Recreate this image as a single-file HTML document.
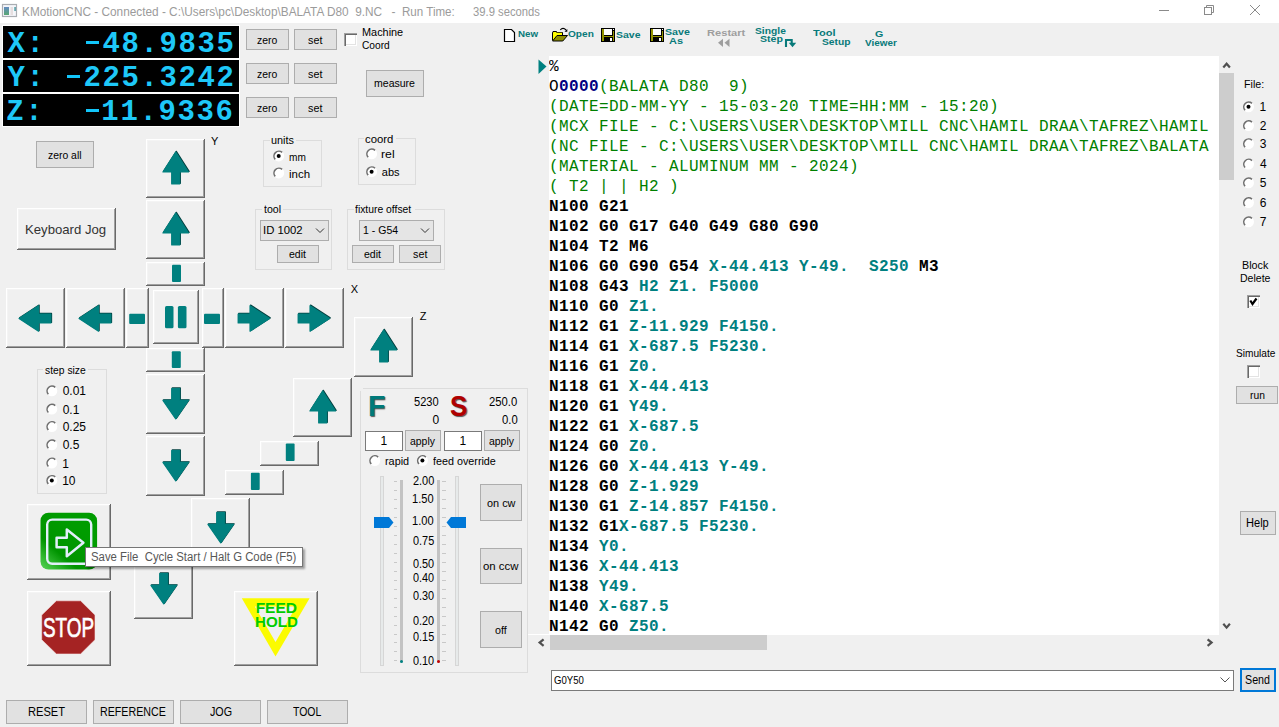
<!DOCTYPE html><html><head><meta charset="utf-8"><title>KMotionCNC</title><style>

*{margin:0;padding:0}
html,body{width:1279px;height:727px;overflow:hidden;background:#f0f0f0;font-family:"Liberation Sans",sans-serif}
.a{position:absolute}
.t{position:absolute;white-space:pre;line-height:1;transform-origin:0 0}
.btn{position:absolute;box-sizing:border-box;background:#e1e1e1;border:1px solid #adadad}
.b3{position:absolute;box-sizing:border-box;background:#f0f0f0;box-shadow:inset -1px -1px #696969,inset 1px 1px #fff,inset -2px -2px #a0a0a0,inset 2px 2px #f4f4f4}
.grp{position:absolute;box-sizing:border-box;border:1px solid #dcdcdc}
.chk{position:absolute;box-sizing:border-box;background:#fff;box-shadow:inset 1px 1px #a0a0a0,inset 2px 2px #696969,inset -1px -1px #fff,inset -2px -2px #e3e3e3}
.cmb{position:absolute;box-sizing:border-box;background:#e5e5e5;border:1px solid #adadad}
.inp{position:absolute;box-sizing:border-box;background:#fff;border:1px solid #7a7a7a}
.trk{position:absolute;box-sizing:border-box;background:#e7eaea;border:1px solid #d6d6d6}
.cl{position:absolute;left:0;white-space:pre;font-family:"Liberation Mono",monospace;font-size:16px;line-height:16px;letter-spacing:0.3984px}

</style></head><body>
<div class="a" style="left:0px;top:0px;width:1279px;height:23px;background:#fff"></div>
<div class="a" style="left:2px;top:25px;width:238px;height:102px;background:#fff"></div>
<div class="a" style="left:3px;top:26px;width:236px;height:32px;background:#000"></div>
<div class="a" style="left:86px;top:41px;width:13px;height:3px;background:#12c6fa"></div>
<div class="btn" style="left:246px;top:29px;width:43px;height:21px;"></div>
<div class="btn" style="left:294px;top:29px;width:43px;height:21px;"></div>
<div class="a" style="left:3px;top:60px;width:236px;height:32px;background:#000"></div>
<div class="a" style="left:67px;top:75px;width:13px;height:3px;background:#12c6fa"></div>
<div class="btn" style="left:246px;top:63px;width:43px;height:21px;"></div>
<div class="btn" style="left:294px;top:63px;width:43px;height:21px;"></div>
<div class="a" style="left:3px;top:94px;width:236px;height:32px;background:#000"></div>
<div class="a" style="left:86px;top:109px;width:13px;height:3px;background:#12c6fa"></div>
<div class="btn" style="left:246px;top:97px;width:43px;height:21px;"></div>
<div class="btn" style="left:294px;top:97px;width:43px;height:21px;"></div>
<div class="chk" style="left:344px;top:33px;width:13px;height:13px;"></div>
<div class="btn" style="left:366px;top:70px;width:58px;height:27px;"></div>
<div class="btn" style="left:36px;top:141px;width:58px;height:27px;"></div>
<div class="b3" style="left:17px;top:208px;width:99px;height:42px;"></div>
<div class="b3" style="left:146px;top:139px;width:59px;height:59px;"></div>
<div class="b3" style="left:146px;top:200px;width:59px;height:59px;"></div>
<div class="b3" style="left:146px;top:262px;width:59px;height:24px;"></div>
<div class="b3" style="left:6px;top:288px;width:59px;height:60px;"></div>
<div class="b3" style="left:66px;top:288px;width:59px;height:60px;"></div>
<div class="b3" style="left:126px;top:288px;width:23px;height:60px;"></div>
<div class="b3" style="left:153px;top:290px;width:46px;height:54px;"></div>
<div class="b3" style="left:202px;top:288px;width:22px;height:60px;"></div>
<div class="b3" style="left:225px;top:288px;width:59px;height:60px;"></div>
<div class="b3" style="left:285px;top:288px;width:59px;height:60px;"></div>
<div class="b3" style="left:146px;top:348px;width:59px;height:24px;"></div>
<div class="b3" style="left:146px;top:374px;width:59px;height:60px;"></div>
<div class="b3" style="left:146px;top:436px;width:59px;height:60px;"></div>
<div class="b3" style="left:354px;top:317px;width:59px;height:60px;"></div>
<div class="b3" style="left:293px;top:378px;width:59px;height:59px;"></div>
<div class="b3" style="left:260px;top:441px;width:59px;height:25px;"></div>
<div class="b3" style="left:225px;top:470px;width:59px;height:25px;"></div>
<div class="b3" style="left:191px;top:498px;width:59px;height:60px;"></div>
<div class="b3" style="left:134px;top:559px;width:59px;height:60px;"></div>
<div class="grp" style="left:263px;top:140px;width:59px;height:47px;"></div>
<div class="a" style="left:270px;top:137px;width:26px;height:6px;background:#f0f0f0"></div>
<div class="grp" style="left:358px;top:138px;width:58px;height:47px;"></div>
<div class="a" style="left:364px;top:135px;width:32px;height:6px;background:#f0f0f0"></div>
<div class="grp" style="left:255px;top:209px;width:77px;height:61px;"></div>
<div class="a" style="left:262px;top:206px;width:21px;height:6px;background:#f0f0f0"></div>
<div class="cmb" style="left:260px;top:220px;width:69px;height:21px;"></div>
<div class="btn" style="left:277px;top:245px;width:42px;height:18px;"></div>
<div class="grp" style="left:347px;top:209px;width:98px;height:61px;"></div>
<div class="a" style="left:354px;top:206px;width:61px;height:6px;background:#f0f0f0"></div>
<div class="cmb" style="left:359px;top:220px;width:75px;height:21px;"></div>
<div class="btn" style="left:352px;top:245px;width:42px;height:18px;"></div>
<div class="btn" style="left:399px;top:245px;width:42px;height:18px;"></div>
<div class="grp" style="left:37px;top:369px;width:70px;height:125px;"></div>
<div class="a" style="left:43px;top:366px;width:45px;height:6px;background:#f0f0f0"></div>
<div class="b3" style="left:27px;top:504px;width:84px;height:76px;"></div>
<div class="b3" style="left:27px;top:591px;width:84px;height:75px;"></div>
<div class="b3" style="left:234px;top:591px;width:84px;height:75px;"></div>
<div class="btn" style="left:6px;top:700px;width:81px;height:24px;"></div>
<div class="btn" style="left:93px;top:700px;width:81px;height:24px;"></div>
<div class="btn" style="left:180px;top:700px;width:81px;height:24px;"></div>
<div class="btn" style="left:267px;top:700px;width:81px;height:24px;"></div>
<div class="grp" style="left:360px;top:388px;width:168px;height:285px;"></div>
<div class="a" style="left:358px;top:385px;width:5px;height:6px;background:#f0f0f0"></div>
<div class="inp" style="left:365px;top:431px;width:38px;height:20px;"></div>
<div class="btn" style="left:405px;top:430px;width:36px;height:21px;"></div>
<div class="inp" style="left:444px;top:431px;width:38px;height:20px;"></div>
<div class="btn" style="left:484px;top:430px;width:36px;height:21px;"></div>
<div class="trk" style="left:380px;top:476px;width:4px;height:190px;"></div>
<div class="trk" style="left:455px;top:476px;width:4px;height:190px;"></div>
<div class="a" style="left:400px;top:480px;width:3px;height:182px;background:#c3c3c3"></div>
<div class="a" style="left:437px;top:480px;width:3px;height:182px;background:#c3c3c3"></div>
<div class="a" style="left:394px;top:481px;width:3px;height:1px;background:#c8c8c8"></div>
<div class="a" style="left:442px;top:481px;width:4px;height:1px;background:#c8c8c8"></div>
<div class="a" style="left:394px;top:490px;width:3px;height:1px;background:#c8c8c8"></div>
<div class="a" style="left:442px;top:490px;width:4px;height:1px;background:#c8c8c8"></div>
<div class="a" style="left:394px;top:499px;width:3px;height:1px;background:#c8c8c8"></div>
<div class="a" style="left:442px;top:499px;width:4px;height:1px;background:#c8c8c8"></div>
<div class="a" style="left:394px;top:508px;width:3px;height:1px;background:#c8c8c8"></div>
<div class="a" style="left:442px;top:508px;width:4px;height:1px;background:#c8c8c8"></div>
<div class="a" style="left:394px;top:517px;width:3px;height:1px;background:#c8c8c8"></div>
<div class="a" style="left:442px;top:517px;width:4px;height:1px;background:#c8c8c8"></div>
<div class="a" style="left:394px;top:526px;width:3px;height:1px;background:#c8c8c8"></div>
<div class="a" style="left:442px;top:526px;width:4px;height:1px;background:#c8c8c8"></div>
<div class="a" style="left:394px;top:535px;width:3px;height:1px;background:#c8c8c8"></div>
<div class="a" style="left:442px;top:535px;width:4px;height:1px;background:#c8c8c8"></div>
<div class="a" style="left:394px;top:544px;width:3px;height:1px;background:#c8c8c8"></div>
<div class="a" style="left:442px;top:544px;width:4px;height:1px;background:#c8c8c8"></div>
<div class="a" style="left:394px;top:553px;width:3px;height:1px;background:#c8c8c8"></div>
<div class="a" style="left:442px;top:553px;width:4px;height:1px;background:#c8c8c8"></div>
<div class="a" style="left:394px;top:562px;width:3px;height:1px;background:#c8c8c8"></div>
<div class="a" style="left:442px;top:562px;width:4px;height:1px;background:#c8c8c8"></div>
<div class="a" style="left:394px;top:571px;width:3px;height:1px;background:#c8c8c8"></div>
<div class="a" style="left:442px;top:571px;width:4px;height:1px;background:#c8c8c8"></div>
<div class="a" style="left:394px;top:580px;width:3px;height:1px;background:#c8c8c8"></div>
<div class="a" style="left:442px;top:580px;width:4px;height:1px;background:#c8c8c8"></div>
<div class="a" style="left:394px;top:589px;width:3px;height:1px;background:#c8c8c8"></div>
<div class="a" style="left:442px;top:589px;width:4px;height:1px;background:#c8c8c8"></div>
<div class="a" style="left:394px;top:598px;width:3px;height:1px;background:#c8c8c8"></div>
<div class="a" style="left:442px;top:598px;width:4px;height:1px;background:#c8c8c8"></div>
<div class="a" style="left:394px;top:607px;width:3px;height:1px;background:#c8c8c8"></div>
<div class="a" style="left:442px;top:607px;width:4px;height:1px;background:#c8c8c8"></div>
<div class="a" style="left:394px;top:616px;width:3px;height:1px;background:#c8c8c8"></div>
<div class="a" style="left:442px;top:616px;width:4px;height:1px;background:#c8c8c8"></div>
<div class="a" style="left:394px;top:625px;width:3px;height:1px;background:#c8c8c8"></div>
<div class="a" style="left:442px;top:625px;width:4px;height:1px;background:#c8c8c8"></div>
<div class="a" style="left:394px;top:634px;width:3px;height:1px;background:#c8c8c8"></div>
<div class="a" style="left:442px;top:634px;width:4px;height:1px;background:#c8c8c8"></div>
<div class="a" style="left:394px;top:642px;width:3px;height:1px;background:#c8c8c8"></div>
<div class="a" style="left:442px;top:642px;width:4px;height:1px;background:#c8c8c8"></div>
<div class="a" style="left:394px;top:651px;width:3px;height:1px;background:#c8c8c8"></div>
<div class="a" style="left:442px;top:651px;width:4px;height:1px;background:#c8c8c8"></div>
<div class="a" style="left:394px;top:660px;width:3px;height:1px;background:#c8c8c8"></div>
<div class="a" style="left:442px;top:660px;width:4px;height:1px;background:#c8c8c8"></div>
<div class="btn" style="left:480px;top:484px;width:42px;height:37px;"></div>
<div class="btn" style="left:480px;top:548px;width:42px;height:36px;"></div>
<div class="btn" style="left:480px;top:611px;width:42px;height:37px;"></div>
<div class="a" style="left:549px;top:56px;width:670px;height:578px;background:#fff;overflow:hidden"></div>
<div class="a" style="left:528px;top:634px;width:691px;height:1px;background:#fff"></div>
<div class="a" style="left:1219px;top:73px;width:15px;height:107px;background:#cdcdcd"></div>
<div class="a" style="left:550px;top:635px;width:217px;height:15px;background:#cdcdcd"></div>
<div class="a" style="left:549px;top:56px;width:670px;height:578px;overflow:hidden"><div class="a" style="left:0px;top:2.74px;width:800px"><div class="cl" style="top:0px"><span style="color:#000;font-weight:400">%</span></div><div class="cl" style="top:20px"><span style="color:#000;font-weight:400">O</span><span style="color:#000080;font-weight:700">0000</span><span style="color:#008000;font-weight:400">(BALATA D80  9)</span></div><div class="cl" style="top:40px"><span style="color:#008000;font-weight:400">(DATE=DD-MM-YY - 15-03-20 TIME=HH:MM - 15:20)</span></div><div class="cl" style="top:60px"><span style="color:#008000;font-weight:400">(MCX FILE - C:\USERS\USER\DESKTOP\MILL CNC\HAMIL DRAA\TAFREZ\HAMIL</span></div><div class="cl" style="top:80px"><span style="color:#008000;font-weight:400">(NC FILE - C:\USERS\USER\DESKTOP\MILL CNC\HAMIL DRAA\TAFREZ\BALATA</span></div><div class="cl" style="top:100px"><span style="color:#008000;font-weight:400">(MATERIAL - ALUMINUM MM - 2024)</span></div><div class="cl" style="top:120px"><span style="color:#008000;font-weight:400">( T2 | | H2 )</span></div><div class="cl" style="top:140px"><span style="color:#000;font-weight:700">N100 G21</span></div><div class="cl" style="top:160px"><span style="color:#000;font-weight:700">N102 G0 G17 G40 G49 G80 G90</span></div><div class="cl" style="top:180px"><span style="color:#000;font-weight:700">N104 T2 M6</span></div><div class="cl" style="top:200px"><span style="color:#000;font-weight:700">N106 G0 G90 G54 </span><span style="color:#008080;font-weight:700">X-44.413 Y-49.  S250 </span><span style="color:#000;font-weight:700">M3</span></div><div class="cl" style="top:220px"><span style="color:#000;font-weight:700">N108 G43 </span><span style="color:#008080;font-weight:700">H2 Z1. F5000</span></div><div class="cl" style="top:240px"><span style="color:#000;font-weight:700">N110 G0 </span><span style="color:#008080;font-weight:700">Z1.</span></div><div class="cl" style="top:260px"><span style="color:#000;font-weight:700">N112 G1 </span><span style="color:#008080;font-weight:700">Z-11.929 F4150.</span></div><div class="cl" style="top:280px"><span style="color:#000;font-weight:700">N114 G1 </span><span style="color:#008080;font-weight:700">X-687.5 F5230.</span></div><div class="cl" style="top:300px"><span style="color:#000;font-weight:700">N116 G1 </span><span style="color:#008080;font-weight:700">Z0.</span></div><div class="cl" style="top:320px"><span style="color:#000;font-weight:700">N118 G1 </span><span style="color:#008080;font-weight:700">X-44.413</span></div><div class="cl" style="top:340px"><span style="color:#000;font-weight:700">N120 G1 </span><span style="color:#008080;font-weight:700">Y49.</span></div><div class="cl" style="top:360px"><span style="color:#000;font-weight:700">N122 G1 </span><span style="color:#008080;font-weight:700">X-687.5</span></div><div class="cl" style="top:380px"><span style="color:#000;font-weight:700">N124 G0 </span><span style="color:#008080;font-weight:700">Z0.</span></div><div class="cl" style="top:400px"><span style="color:#000;font-weight:700">N126 G0 </span><span style="color:#008080;font-weight:700">X-44.413 Y-49.</span></div><div class="cl" style="top:420px"><span style="color:#000;font-weight:700">N128 G0 </span><span style="color:#008080;font-weight:700">Z-1.929</span></div><div class="cl" style="top:440px"><span style="color:#000;font-weight:700">N130 G1 </span><span style="color:#008080;font-weight:700">Z-14.857 F4150.</span></div><div class="cl" style="top:460px"><span style="color:#000;font-weight:700">N132 G1</span><span style="color:#008080;font-weight:700">X-687.5 F5230.</span></div><div class="cl" style="top:480px"><span style="color:#000;font-weight:700">N134 </span><span style="color:#008080;font-weight:700">Y0.</span></div><div class="cl" style="top:500px"><span style="color:#000;font-weight:700">N136 </span><span style="color:#008080;font-weight:700">X-44.413</span></div><div class="cl" style="top:520px"><span style="color:#000;font-weight:700">N138 </span><span style="color:#008080;font-weight:700">Y49.</span></div><div class="cl" style="top:540px"><span style="color:#000;font-weight:700">N140 </span><span style="color:#008080;font-weight:700">X-687.5</span></div><div class="cl" style="top:560px"><span style="color:#000;font-weight:700">N142 G0 </span><span style="color:#008080;font-weight:700">Z50.</span></div></div></div>
<div class="chk" style="left:1247px;top:295px;width:13px;height:13px;"></div>
<div class="chk" style="left:1247px;top:365px;width:13px;height:13px;"></div>
<div class="btn" style="left:1236px;top:386px;width:42px;height:18px;"></div>
<div class="btn" style="left:1240px;top:511px;width:36px;height:24px;"></div>
<div class="inp" style="left:551px;top:670px;width:683px;height:21px;"></div>
<div class="a" style="left:1240px;top:668px;width:36px;height:24px;background:#e1e1e1;border:2px solid #0078d7;box-sizing:border-box"></div>
<svg class="a" style="left:0;top:0" width="1279" height="727" viewBox="0 0 1279 727"><defs><linearGradient id="ig" x1="0" y1="0" x2="0" y2="1"><stop offset="0" stop-color="#4a78b8"/><stop offset="1" stop-color="#3c9a5a"/></linearGradient></defs><rect x="2.5" y="4.5" width="14" height="12" fill="#f4f6fa" stroke="#a9adb2" stroke-width="1.2"/><rect x="4" y="7" width="5" height="8" fill="url(#ig)" opacity="0.85"/><rect x="10.5" y="7" width="2.5" height="8" fill="#e6dedf"/><rect x="14.2" y="7" width="1.8" height="4" fill="#6aa8b0"/><line x1="1159" y1="10.5" x2="1169" y2="10.5" stroke="#8a8a8a" stroke-width="1"/><rect x="1204.5" y="7.5" width="7" height="7" fill="none" stroke="#8a8a8a"/><path d="M1206.5,7.5 V5.5 H1213.5 V12.5 H1211.5" fill="none" stroke="#8a8a8a"/><path d="M1250,5 L1260,15 M1260,5 L1250,15" stroke="#8a8a8a" stroke-width="1"/><polygon points="176.30,151.40 189.10,171.40 180.30,171.40 180.30,183.30 172.30,183.30 172.30,171.40 163.50,171.40" fill="#034040" stroke="#034040" stroke-width="1.3" stroke-linejoin="round"/><polygon points="175.70,152.00 188.50,172.00 179.70,172.00 179.70,183.90 171.70,183.90 171.70,172.00 162.90,172.00" fill="#00807f" stroke="#00807f" stroke-width="1.1" stroke-linejoin="round"/><polygon points="176.30,212.40 189.10,232.40 180.30,232.40 180.30,244.30 172.30,244.30 172.30,232.40 163.50,232.40" fill="#034040" stroke="#034040" stroke-width="1.3" stroke-linejoin="round"/><polygon points="175.70,213.00 188.50,233.00 179.70,233.00 179.70,244.90 171.70,244.90 171.70,233.00 162.90,233.00" fill="#00807f" stroke="#00807f" stroke-width="1.1" stroke-linejoin="round"/><rect x="172" y="264.8" width="9" height="17.19999999999999" rx="1" fill="#00807f"/><polygon points="19.60,317.90 39.10,305.10 39.10,313.40 51.50,313.40 51.50,322.40 39.10,322.40 39.10,330.70" fill="#034040" stroke="#034040" stroke-width="1.3" stroke-linejoin="round"/><polygon points="19.00,318.50 38.50,305.70 38.50,314.00 50.90,314.00 50.90,323.00 38.50,323.00 38.50,331.30" fill="#00807f" stroke="#00807f" stroke-width="1.1" stroke-linejoin="round"/><polygon points="79.60,317.90 99.10,305.10 99.10,313.40 111.50,313.40 111.50,322.40 99.10,322.40 99.10,330.70" fill="#034040" stroke="#034040" stroke-width="1.3" stroke-linejoin="round"/><polygon points="79.00,318.50 98.50,305.70 98.50,314.00 110.90,314.00 110.90,323.00 98.50,323.00 98.50,331.30" fill="#00807f" stroke="#00807f" stroke-width="1.1" stroke-linejoin="round"/><rect x="129.2" y="313.8" width="15.800000000000011" height="10.199999999999989" rx="1" fill="#00807f"/><rect x="165" y="306" width="8.5" height="22.30000000000001" rx="1.5" fill="#00807f"/><rect x="177.9" y="306" width="8.599999999999994" height="22.30000000000001" rx="1.5" fill="#00807f"/><rect x="204" y="313.7" width="16" height="10.300000000000011" rx="1" fill="#00807f"/><polygon points="270.20,317.90 250.60,305.10 250.60,313.40 238.70,313.40 238.70,322.40 250.60,322.40 250.60,330.70" fill="#034040" stroke="#034040" stroke-width="1.3" stroke-linejoin="round"/><polygon points="269.60,318.50 250.00,305.70 250.00,314.00 238.10,314.00 238.10,323.00 250.00,323.00 250.00,331.30" fill="#00807f" stroke="#00807f" stroke-width="1.1" stroke-linejoin="round"/><polygon points="330.20,317.90 310.60,305.10 310.60,313.40 298.70,313.40 298.70,322.40 310.60,322.40 310.60,330.70" fill="#034040" stroke="#034040" stroke-width="1.3" stroke-linejoin="round"/><polygon points="329.60,318.50 310.00,305.70 310.00,314.00 298.10,314.00 298.10,323.00 310.00,323.00 310.00,331.30" fill="#00807f" stroke="#00807f" stroke-width="1.1" stroke-linejoin="round"/><rect x="171.8" y="351.2" width="9.0" height="16.80000000000001" rx="1" fill="#00807f"/><polygon points="176.30,418.40 189.10,399.80 180.30,399.80 180.30,388.00 172.30,388.00 172.30,399.80 163.50,399.80" fill="#034040" stroke="#034040" stroke-width="1.3" stroke-linejoin="round"/><polygon points="175.70,419.00 188.50,400.40 179.70,400.40 179.70,388.60 171.70,388.60 171.70,400.40 162.90,400.40" fill="#00807f" stroke="#00807f" stroke-width="1.1" stroke-linejoin="round"/><polygon points="176.30,480.40 189.10,461.80 180.30,461.80 180.30,450.00 172.30,450.00 172.30,461.80 163.50,461.80" fill="#034040" stroke="#034040" stroke-width="1.3" stroke-linejoin="round"/><polygon points="175.70,481.00 188.50,462.40 179.70,462.40 179.70,450.60 171.70,450.60 171.70,462.40 162.90,462.40" fill="#00807f" stroke="#00807f" stroke-width="1.1" stroke-linejoin="round"/><polygon points="384.30,329.40 397.10,349.40 388.30,349.40 388.30,361.30 380.30,361.30 380.30,349.40 371.50,349.40" fill="#034040" stroke="#034040" stroke-width="1.3" stroke-linejoin="round"/><polygon points="383.70,330.00 396.50,350.00 387.70,350.00 387.70,361.90 379.70,361.90 379.70,350.00 370.90,350.00" fill="#00807f" stroke="#00807f" stroke-width="1.1" stroke-linejoin="round"/><polygon points="323.30,390.40 336.10,410.40 327.30,410.40 327.30,422.30 319.30,422.30 319.30,410.40 310.50,410.40" fill="#034040" stroke="#034040" stroke-width="1.3" stroke-linejoin="round"/><polygon points="322.70,391.00 335.50,411.00 326.70,411.00 326.70,422.90 318.70,422.90 318.70,411.00 309.90,411.00" fill="#00807f" stroke="#00807f" stroke-width="1.1" stroke-linejoin="round"/><rect x="285.8" y="443.6" width="8.800000000000011" height="17.399999999999977" rx="1" fill="#00807f"/><rect x="250.9" y="472.8" width="8.799999999999983" height="17.19999999999999" rx="1" fill="#00807f"/><polygon points="221.30,542.40 234.10,523.80 225.30,523.80 225.30,512.00 217.30,512.00 217.30,523.80 208.50,523.80" fill="#034040" stroke="#034040" stroke-width="1.3" stroke-linejoin="round"/><polygon points="220.70,543.00 233.50,524.40 224.70,524.40 224.70,512.60 216.70,512.60 216.70,524.40 207.90,524.40" fill="#00807f" stroke="#00807f" stroke-width="1.1" stroke-linejoin="round"/><polygon points="164.30,603.40 177.10,584.80 168.30,584.80 168.30,573.00 160.30,573.00 160.30,584.80 151.50,584.80" fill="#034040" stroke="#034040" stroke-width="1.3" stroke-linejoin="round"/><polygon points="163.70,604.00 176.50,585.40 167.70,585.40 167.70,573.60 159.70,573.60 159.70,585.40 150.90,585.40" fill="#00807f" stroke="#00807f" stroke-width="1.1" stroke-linejoin="round"/><circle cx="278.7" cy="155.9" r="5.5" fill="#fff"/><path d="M282.16,152.44 A4.9,4.9 0 0 0 275.24,159.36" fill="none" stroke="#6e6e6e" stroke-width="1.6"/><circle cx="278.7" cy="155.9" r="2.0" fill="#000"/><circle cx="278.7" cy="172.9" r="5.5" fill="#fff"/><path d="M282.16,169.44 A4.9,4.9 0 0 0 275.24,176.36" fill="none" stroke="#6e6e6e" stroke-width="1.6"/><circle cx="371.6" cy="153.8" r="5.5" fill="#fff"/><path d="M375.06,150.34 A4.9,4.9 0 0 0 368.14,157.26" fill="none" stroke="#6e6e6e" stroke-width="1.6"/><circle cx="371.6" cy="171.7" r="5.5" fill="#fff"/><path d="M375.06,168.24 A4.9,4.9 0 0 0 368.14,175.16" fill="none" stroke="#6e6e6e" stroke-width="1.6"/><circle cx="371.6" cy="171.7" r="2.0" fill="#000"/><path d="M316,228.5 L320,232.5 L324,228.5" fill="none" stroke="#333" stroke-width="1"/><path d="M421,228.5 L425,232.5 L429,228.5" fill="none" stroke="#333" stroke-width="1"/><circle cx="51.8" cy="390.8" r="5.5" fill="#fff"/><path d="M55.26,387.34 A4.9,4.9 0 0 0 48.34,394.26" fill="none" stroke="#6e6e6e" stroke-width="1.6"/><circle cx="51.8" cy="409.1" r="5.5" fill="#fff"/><path d="M55.26,405.64 A4.9,4.9 0 0 0 48.34,412.56" fill="none" stroke="#6e6e6e" stroke-width="1.6"/><circle cx="51.8" cy="426.5" r="5.5" fill="#fff"/><path d="M55.26,423.04 A4.9,4.9 0 0 0 48.34,429.96" fill="none" stroke="#6e6e6e" stroke-width="1.6"/><circle cx="51.8" cy="444.8" r="5.5" fill="#fff"/><path d="M55.26,441.34 A4.9,4.9 0 0 0 48.34,448.26" fill="none" stroke="#6e6e6e" stroke-width="1.6"/><circle cx="51.8" cy="463" r="5.5" fill="#fff"/><path d="M55.26,459.54 A4.9,4.9 0 0 0 48.34,466.46" fill="none" stroke="#6e6e6e" stroke-width="1.6"/><circle cx="51.8" cy="480.4" r="5.5" fill="#fff"/><path d="M55.26,476.94 A4.9,4.9 0 0 0 48.34,483.86" fill="none" stroke="#6e6e6e" stroke-width="1.6"/><circle cx="51.8" cy="480.4" r="2.0" fill="#000"/><defs><linearGradient id="gg" x1="0.7" y1="0.3" x2="0.1" y2="1"><stop offset="0" stop-color="#009c00"/><stop offset="0.6" stop-color="#009400"/><stop offset="1" stop-color="#4ccc4c"/></linearGradient></defs>
<rect x="40.5" y="512.7" width="56.6" height="56.8" rx="8" fill="url(#gg)"/>
<rect x="47.2" y="519.6" width="44" height="44.2" rx="5" fill="none" stroke="#e2eefa" stroke-width="2.4"/>
<path d="M56.6,537.8 H66.8 V529.6 L83.4,542.8 L66.8,556.2 V547.2 H56.6 Z" fill="none" stroke="#e2eefa" stroke-width="2.5" stroke-linejoin="round"/><polygon points="56.4,600.8 80.6,600.8 95,615.1 95,639.7 80.6,654 56.4,654 41.7,639.7 41.7,615.1" fill="#a52323" stroke="#f6e6e6" stroke-width="0.6"/><path d="M241.8,598.3 L309.6,598.3 L275.5,656.5 Z M254.8,606.4 L275.5,642 L296.2,606.4 Z" fill="#fbfb00" fill-rule="evenodd"/><circle cx="374.7" cy="460.5" r="5.5" fill="#fff"/><path d="M378.16,457.04 A4.9,4.9 0 0 0 371.24,463.96" fill="none" stroke="#6e6e6e" stroke-width="1.6"/><circle cx="422.4" cy="460.5" r="5.5" fill="#fff"/><path d="M425.86,457.04 A4.9,4.9 0 0 0 418.94,463.96" fill="none" stroke="#6e6e6e" stroke-width="1.6"/><circle cx="422.4" cy="460.5" r="2.0" fill="#000"/><circle cx="401.5" cy="661.5" r="1.5" fill="#008080"/><circle cx="438.5" cy="661.5" r="1.5" fill="#c00000"/><polygon points="374,517 389,517 393.5,522.5 389,528 374,528" fill="#0078d7"/><polygon points="466,517 451,517 446.5,522.5 451,528 466,528" fill="#0078d7"/><path d="M504.5,29.5 H511.5 L514.5,32.5 V41.5 H504.5 Z" fill="#fff" stroke="#000" stroke-width="1.2"/><path d="M552.5,40.5 V32.5 H553 V31.5 H556.5 V32.5 H562.5 V36" fill="#ffff00" stroke="#000" stroke-width="1"/><polygon points="553,32.8 562,32.8 562,35.5 557,35.5 553,40" fill="#ffff00"/><polygon points="557,35.5 567.5,35.5 562.8,41 552.6,41" fill="#8f8f00" stroke="#000" stroke-width="1" stroke-linejoin="miter"/><path d="M560.3,29.8 Q563,27 566,30" fill="none" stroke="#000" stroke-width="1.2"/><polygon points="564.5,31.8 567.3,31.8 567.3,29" fill="#000"/><rect x="601" y="28" width="14" height="14" fill="#000"/><rect x="602" y="29" width="2" height="12" fill="#949400"/><rect x="613" y="31" width="1" height="10" fill="#949400"/><rect x="604" y="36" width="9" height="1" fill="#949400"/><rect x="604" y="29" width="8" height="6" fill="#fff"/><rect x="610" y="38" width="2" height="3" fill="#fff"/><rect x="613" y="29" width="1" height="1" fill="#fff"/><rect x="650" y="28" width="14" height="14" fill="#000"/><rect x="651" y="29" width="2" height="12" fill="#949400"/><rect x="662" y="31" width="1" height="10" fill="#949400"/><rect x="653" y="36" width="9" height="1" fill="#949400"/><rect x="653" y="29" width="8" height="6" fill="#fff"/><rect x="659" y="38" width="2" height="3" fill="#fff"/><rect x="662" y="29" width="1" height="1" fill="#fff"/><polygon points="723,38.8 723,46.9 718,42.85" fill="#9e9e9e"/><polygon points="729.5,38.8 729.5,46.9 724.5,42.85" fill="#9e9e9e"/><path d="M786,47 V40 H791.7 V43.5" fill="none" stroke="#087a7a" stroke-width="2.1"/><polygon points="788.8,42.8 796.2,42.8 792.5,47.2" fill="#087a7a"/><polygon points="538.5,59.5 546.5,66.5 538.5,74" fill="#008080"/><path d="M1223.3,67.5 L1226.6,63.7 L1229.9,67.5" fill="none" stroke="#505050" stroke-width="2.2"/><path d="M1223.3,623.8 L1226.6,627.6 L1229.9,623.8" fill="none" stroke="#505050" stroke-width="2.2"/><path d="M543.6,639.3 L539.6,642.6 L543.6,645.9" fill="none" stroke="#505050" stroke-width="2.2"/><path d="M1207.6,639.3 L1211.6,642.6 L1207.6,645.9" fill="none" stroke="#505050" stroke-width="2.2"/><circle cx="1248.5" cy="106.8" r="5.5" fill="#fff"/><path d="M1251.96,103.34 A4.9,4.9 0 0 0 1245.04,110.26" fill="none" stroke="#6e6e6e" stroke-width="1.6"/><circle cx="1248.5" cy="106.8" r="2.0" fill="#000"/><circle cx="1248.5" cy="125.6" r="5.5" fill="#fff"/><path d="M1251.96,122.14 A4.9,4.9 0 0 0 1245.04,129.06" fill="none" stroke="#6e6e6e" stroke-width="1.6"/><circle cx="1248.5" cy="143.7" r="5.5" fill="#fff"/><path d="M1251.96,140.24 A4.9,4.9 0 0 0 1245.04,147.16" fill="none" stroke="#6e6e6e" stroke-width="1.6"/><circle cx="1248.5" cy="164" r="5.5" fill="#fff"/><path d="M1251.96,160.54 A4.9,4.9 0 0 0 1245.04,167.46" fill="none" stroke="#6e6e6e" stroke-width="1.6"/><circle cx="1248.5" cy="182.8" r="5.5" fill="#fff"/><path d="M1251.96,179.34 A4.9,4.9 0 0 0 1245.04,186.26" fill="none" stroke="#6e6e6e" stroke-width="1.6"/><circle cx="1248.5" cy="202.6" r="5.5" fill="#fff"/><path d="M1251.96,199.14 A4.9,4.9 0 0 0 1245.04,206.06" fill="none" stroke="#6e6e6e" stroke-width="1.6"/><circle cx="1248.5" cy="221.8" r="5.5" fill="#fff"/><path d="M1251.96,218.34 A4.9,4.9 0 0 0 1245.04,225.26" fill="none" stroke="#6e6e6e" stroke-width="1.6"/><path d="M1250.3,300.5 L1252.5,304 L1256.5,298.5" fill="none" stroke="#000" stroke-width="2.2" stroke-linejoin="miter"/><path d="M1220.5,677.5 L1225,682 L1229.5,677.5" fill="none" stroke="#555" stroke-width="1"/></svg>
<div class="t" style="left:22.43px;top:5.84px;font-size:12px;color:#9b9b9b;transform:scaleX(0.9848);">KMotionCNC - Connected - C:\Users\pc\Desktop\BALATA D80  9.NC</div>
<div class="t" style="left:391.47px;top:5.84px;font-size:12px;color:#9b9b9b;">-</div>
<div class="t" style="left:401.55px;top:5.84px;font-size:12px;color:#9b9b9b;transform:scaleX(0.9649);">Run Time:</div>
<div class="t" style="left:473.17px;top:5.84px;font-size:12px;color:#9b9b9b;transform:scaleX(0.9377);">39.9 seconds</div>
<div class="t" style="left:7.60px;top:29.78px;font-size:29px;color:#1ec8f8;font-weight:700;font-family:'Liberation Mono', monospace;letter-spacing:1.6px;">X:   48.9835</div>
<div class="t" style="left:257.38px;top:34.77px;font-size:11px;color:#000;transform:scaleX(0.9468);">zero</div>
<div class="t" style="left:308.20px;top:34.77px;font-size:11px;color:#000;transform:scaleX(0.9799);">set</div>
<div class="t" style="left:7.56px;top:63.78px;font-size:29px;color:#1ec8f8;font-weight:700;font-family:'Liberation Mono', monospace;letter-spacing:1.6px;">Y:  225.3242</div>
<div class="t" style="left:257.38px;top:68.77px;font-size:11px;color:#000;transform:scaleX(0.9468);">zero</div>
<div class="t" style="left:308.20px;top:68.77px;font-size:11px;color:#000;transform:scaleX(0.9799);">set</div>
<div class="t" style="left:6.37px;top:97.78px;font-size:29px;color:#1ec8f8;font-weight:700;font-family:'Liberation Mono', monospace;letter-spacing:1.6px;">Z:   11.9336</div>
<div class="t" style="left:257.38px;top:102.77px;font-size:11px;color:#000;transform:scaleX(0.9468);">zero</div>
<div class="t" style="left:308.20px;top:102.77px;font-size:11px;color:#000;transform:scaleX(0.9799);">set</div>
<div class="t" style="left:361.51px;top:27.29px;font-size:11px;color:#000;transform:scaleX(0.9904);">Machine</div>
<div class="t" style="left:361.88px;top:40.19px;font-size:11px;color:#000;transform:scaleX(0.9271);">Coord</div>
<div class="t" style="left:374.40px;top:78.39px;font-size:11px;color:#000;transform:scaleX(0.9572);">measure</div>
<div class="t" style="left:48.38px;top:149.69px;font-size:11px;color:#000;transform:scaleX(0.9452);">zero all</div>
<div class="t" style="left:24.72px;top:222.89px;font-size:13px;color:#333;transform:scaleX(1.0113);">Keyboard Jog</div>
<div class="t" style="left:211.06px;top:135.69px;font-size:11px;color:#000;">Y</div>
<div class="t" style="left:350.75px;top:283.69px;font-size:11px;color:#000;">X</div>
<div class="t" style="left:419.65px;top:311.29px;font-size:11px;color:#000;">Z</div>
<div class="t" style="left:271.00px;top:135.29px;font-size:11px;color:#000;transform:scaleX(0.9854);">units</div>
<div class="t" style="left:288.83px;top:151.69px;font-size:11px;color:#000;transform:scaleX(0.9188);">mm</div>
<div class="t" style="left:288.73px;top:168.69px;font-size:11px;color:#000;transform:scaleX(1.0412);">inch</div>
<div class="t" style="left:365.02px;top:133.69px;font-size:11px;color:#000;transform:scaleX(1.0289);">coord</div>
<div class="t" style="left:381.49px;top:148.99px;font-size:11px;color:#000;transform:scaleX(1.1154);">rel</div>
<div class="t" style="left:381.83px;top:167.19px;font-size:11px;color:#000;">abs</div>
<div class="t" style="left:263.64px;top:204.49px;font-size:11px;color:#000;transform:scaleX(0.9624);">tool</div>
<div class="t" style="left:263.36px;top:225.39px;font-size:11px;color:#000;transform:scaleX(1.0282);">ID 1002</div>
<div class="t" style="left:289.30px;top:248.99px;font-size:11px;color:#000;transform:scaleX(0.9600);">edit</div>
<div class="t" style="left:355.45px;top:204.49px;font-size:11px;color:#000;transform:scaleX(0.9417);">fixture offset</div>
<div class="t" style="left:363.00px;top:225.39px;font-size:11px;color:#000;transform:scaleX(0.9571);">1 - G54</div>
<div class="t" style="left:364.30px;top:248.99px;font-size:11px;color:#000;transform:scaleX(0.9600);">edit</div>
<div class="t" style="left:412.70px;top:248.99px;font-size:11px;color:#000;transform:scaleX(0.9799);">set</div>
<div class="t" style="left:44.71px;top:365.19px;font-size:11px;color:#000;transform:scaleX(0.9387);">step size</div>
<div class="t" style="left:62.63px;top:385.44px;font-size:12px;color:#000;">0.01</div>
<div class="t" style="left:62.63px;top:403.74px;font-size:12px;color:#000;">0.1</div>
<div class="t" style="left:62.63px;top:421.14px;font-size:12px;color:#000;">0.25</div>
<div class="t" style="left:62.63px;top:439.44px;font-size:12px;color:#000;">0.5</div>
<div class="t" style="left:62.19px;top:457.64px;font-size:12px;color:#000;">1</div>
<div class="t" style="left:62.19px;top:475.04px;font-size:12px;color:#000;">10</div>
<div class="t" style="left:42.54px;top:613.72px;font-size:27.5px;color:#fff;transform:scaleX(0.6872);-webkit-text-stroke:0.7px #fff;">STOP</div>
<div class="t" style="left:255.67px;top:599.58px;font-size:15.5px;color:#00cc00;font-weight:700;">FEED</div>
<div class="t" style="left:254.68px;top:614.48px;font-size:15.5px;color:#00cc00;font-weight:700;transform:scaleX(0.9805);">HOLD</div>
<div class="t" style="left:27.64px;top:705.29px;font-size:13px;color:#000;transform:scaleX(0.8552);">RESET</div>
<div class="t" style="left:100.37px;top:705.29px;font-size:13px;color:#000;transform:scaleX(0.8211);">REFERENCE</div>
<div class="t" style="left:209.78px;top:705.29px;font-size:13px;color:#000;transform:scaleX(0.8259);">JOG</div>
<div class="t" style="left:293.32px;top:705.29px;font-size:13px;color:#000;transform:scaleX(0.8047);">TOOL</div>
<div class="t" style="left:360.00px;top:378.69px;font-size:11px;color:#000;"></div>
<div class="t" style="left:367.50px;top:391.95px;font-size:29px;color:#007a7a;font-weight:700;transform:scaleX(0.9788);text-shadow:1px 1px 1px #555;">F</div>
<div class="t" style="left:450.05px;top:392.35px;font-size:29px;color:#b00000;font-weight:700;transform:scaleX(0.8979);text-shadow:1px 1px 1px #555;">S</div>
<div class="t" style="left:414.36px;top:395.54px;font-size:12px;color:#000;transform:scaleX(0.9244);">5230</div>
<div class="t" style="left:432.39px;top:413.54px;font-size:12px;color:#000;">0</div>
<div class="t" style="left:489.23px;top:395.54px;font-size:12px;color:#000;transform:scaleX(0.9393);">250.0</div>
<div class="t" style="left:501.76px;top:413.54px;font-size:12px;color:#000;transform:scaleX(0.9400);">0.0</div>
<div class="t" style="left:380.50px;top:435.34px;font-size:12px;color:#000;">1</div>
<div class="t" style="left:410.31px;top:435.69px;font-size:11px;color:#000;transform:scaleX(0.9493);">apply</div>
<div class="t" style="left:459.50px;top:435.34px;font-size:12px;color:#000;">1</div>
<div class="t" style="left:489.31px;top:435.69px;font-size:11px;color:#000;transform:scaleX(0.9493);">apply</div>
<div class="t" style="left:384.58px;top:455.69px;font-size:11px;color:#000;transform:scaleX(0.9861);">rapid</div>
<div class="t" style="left:432.95px;top:455.69px;font-size:11px;color:#000;transform:scaleX(0.9786);">feed override</div>
<div class="t" style="left:412.65px;top:475.42px;font-size:12.5px;color:#000;transform:scaleX(0.8746);">2.00</div>
<div class="t" style="left:412.36px;top:493.42px;font-size:12.5px;color:#000;transform:scaleX(0.8869);">1.50</div>
<div class="t" style="left:412.36px;top:515.42px;font-size:12.5px;color:#000;transform:scaleX(0.8869);">1.00</div>
<div class="t" style="left:412.77px;top:535.42px;font-size:12.5px;color:#000;transform:scaleX(0.8707);">0.75</div>
<div class="t" style="left:412.78px;top:557.92px;font-size:12.5px;color:#000;transform:scaleX(0.8693);">0.50</div>
<div class="t" style="left:412.78px;top:572.22px;font-size:12.5px;color:#000;transform:scaleX(0.8693);">0.40</div>
<div class="t" style="left:412.78px;top:590.42px;font-size:12.5px;color:#000;transform:scaleX(0.8693);">0.30</div>
<div class="t" style="left:412.78px;top:615.42px;font-size:12.5px;color:#000;transform:scaleX(0.8693);">0.20</div>
<div class="t" style="left:412.77px;top:630.92px;font-size:12.5px;color:#000;transform:scaleX(0.8707);">0.15</div>
<div class="t" style="left:412.78px;top:654.92px;font-size:12.5px;color:#000;transform:scaleX(0.8693);">0.10</div>
<div class="t" style="left:486.54px;top:497.77px;font-size:11px;color:#000;transform:scaleX(0.9894);">on cw</div>
<div class="t" style="left:483.02px;top:561.27px;font-size:11px;color:#000;transform:scaleX(1.0355);">on ccw</div>
<div class="t" style="left:494.80px;top:624.77px;font-size:11px;color:#000;transform:scaleX(0.9759);">off</div>
<div class="t" style="left:518.15px;top:28.96px;font-size:9.5px;color:#087a7a;font-weight:700;transform:scaleX(1.0256);">New</div>
<div class="t" style="left:567.79px;top:28.96px;font-size:9.5px;color:#087a7a;font-weight:700;transform:scaleX(1.0644);">Open</div>
<div class="t" style="left:615.90px;top:29.96px;font-size:9.5px;color:#087a7a;font-weight:700;transform:scaleX(1.1024);">Save</div>
<div class="t" style="left:665.49px;top:26.76px;font-size:9.5px;color:#087a7a;font-weight:700;transform:scaleX(1.1210);">Save</div>
<div class="t" style="left:668.93px;top:35.56px;font-size:9.5px;color:#087a7a;font-weight:700;transform:scaleX(1.1547);">As</div>
<div class="t" style="left:706.86px;top:28.26px;font-size:9.5px;color:#9e9e9e;font-weight:700;transform:scaleX(1.1693);">Restart</div>
<div class="t" style="left:754.50px;top:25.56px;font-size:9.5px;color:#087a7a;font-weight:700;transform:scaleX(1.0822);">Single</div>
<div class="t" style="left:759.50px;top:33.86px;font-size:9.5px;color:#087a7a;font-weight:700;transform:scaleX(1.1143);">Step</div>
<div class="t" style="left:813.48px;top:28.26px;font-size:9.5px;color:#087a7a;font-weight:700;transform:scaleX(1.1625);">Tool</div>
<div class="t" style="left:821.80px;top:37.16px;font-size:9.5px;color:#087a7a;font-weight:700;transform:scaleX(1.0806);">Setup</div>
<div class="t" style="left:875.36px;top:28.76px;font-size:9.5px;color:#087a7a;font-weight:700;transform:scaleX(1.1231);">G</div>
<div class="t" style="left:864.73px;top:38.36px;font-size:9.5px;color:#087a7a;font-weight:700;transform:scaleX(1.0454);">Viewer</div>
<div class="t" style="left:1244.33px;top:78.69px;font-size:11px;color:#000;transform:scaleX(0.9696);">File:</div>
<div class="t" style="left:1259.39px;top:101.24px;font-size:12px;color:#000;">1</div>
<div class="t" style="left:1259.70px;top:120.04px;font-size:12px;color:#000;">2</div>
<div class="t" style="left:1259.84px;top:138.14px;font-size:12px;color:#000;">3</div>
<div class="t" style="left:1260.02px;top:158.44px;font-size:12px;color:#000;">4</div>
<div class="t" style="left:1259.82px;top:177.24px;font-size:12px;color:#000;">5</div>
<div class="t" style="left:1259.69px;top:197.04px;font-size:12px;color:#000;">6</div>
<div class="t" style="left:1259.68px;top:216.24px;font-size:12px;color:#000;">7</div>
<div class="t" style="left:1241.72px;top:260.09px;font-size:11px;color:#000;transform:scaleX(0.9765);">Block</div>
<div class="t" style="left:1240.04px;top:272.69px;font-size:11px;color:#000;transform:scaleX(0.9571);">Delete</div>
<div class="t" style="left:1236.04px;top:347.69px;font-size:11px;color:#000;transform:scaleX(0.9209);">Simulate</div>
<div class="t" style="left:1249.57px;top:390.27px;font-size:11px;color:#000;transform:scaleX(0.9340);">run</div>
<div class="t" style="left:1246.39px;top:516.84px;font-size:12px;color:#000;transform:scaleX(0.9228);">Help</div>
<div class="t" style="left:554.12px;top:674.69px;font-size:11px;color:#000;transform:scaleX(0.8718);">G0Y50</div>
<div class="t" style="left:1244.81px;top:673.74px;font-size:12px;color:#000;transform:scaleX(0.8912);">Send</div>
<div class="a" style="left:85px;top:547px;width:218px;height:20px;box-sizing:border-box;background:#fff;border:1px solid #767676;box-shadow:2px 2px 2px rgba(0,0,0,0.35)"></div>
<div class="t" style="left:90.58px;top:550.54px;font-size:12px;color:#575757;transform:scaleX(0.9473);">Save File  Cycle Start / Halt G Code (F5)</div>
</body></html>
